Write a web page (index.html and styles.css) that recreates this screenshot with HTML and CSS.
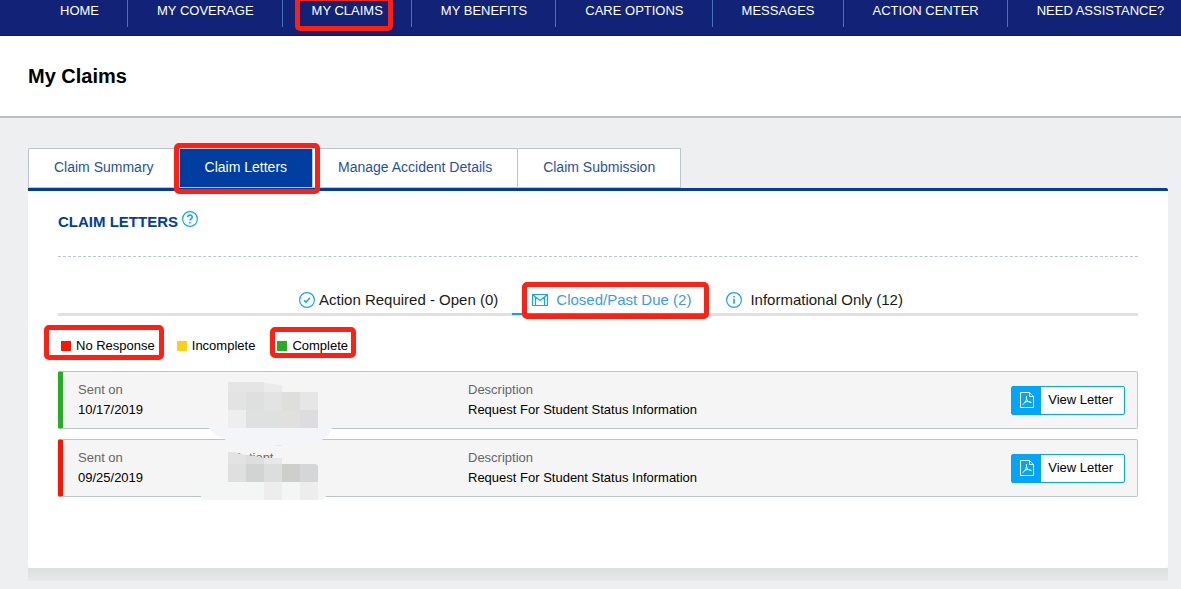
FILE: index.html
```html
<!DOCTYPE html>
<html lang="en">
<head>
<meta charset="utf-8">
<title>My Claims</title>
<link rel="stylesheet" href="styles.css">
</head>
<body>
<nav class="nav" aria-label="Main">
  <a class="nav-item" href="#">HOME</a>
  <a class="nav-item" href="#">MY COVERAGE</a>
  <a class="nav-item marked mark-nav" href="#">MY CLAIMS</a>
  <a class="nav-item" href="#">MY BENEFITS</a>
  <a class="nav-item" href="#">CARE OPTIONS</a>
  <a class="nav-item" href="#">MESSAGES</a>
  <a class="nav-item" href="#">ACTION CENTER</a>
  <a class="nav-item" href="#">NEED ASSISTANCE?</a>
</nav>
<header class="page-head"><h1 class="page-title">My Claims</h1></header>
<main class="content">
  <div class="tabs">
    <button class="tab" type="button">Claim Summary</button>
    <button class="tab active marked mark-tab" type="button">Claim Letters</button>
    <button class="tab" type="button">Manage Accident Details</button>
    <button class="tab" type="button">Claim Submission</button>
  </div>
  <section class="panel">
    <div class="section-head">
      <h2 class="section-title">CLAIM LETTERS</h2>
      <button class="help" type="button" aria-label="Help">
        <svg class="icon" viewBox="0 0 16 16"><circle cx="8" cy="8" r="7.4"/><path class="thick" d="M5.7 6.3c0-3 4.6-3 4.6-.2 0 1.7-2.3 1.6-2.3 3.5M8 11.1v1.5"/></svg>
      </button>
    </div>
    <div class="filters">
      <button class="filter" type="button">
        <svg class="icon" viewBox="0 0 16 16"><circle cx="8" cy="8" r="7.4"/><path class="thick" d="M5 8.4l2 1.8 4-4.4"/></svg>Action Required - Open (0)</button>
      <button class="filter current marked mark-filter" type="button">
        <svg class="icon" viewBox="0 0 16 16"><path d="M.6 2.500h14.800v11H.6zM3.500 13.500V5l4.500 3.500L12.500 5v8.500M.6 2.500L3.500 5M15.400 2.500L12.500 5"/></svg>Closed/Past Due (2)</button>
      <button class="filter info" type="button">
        <svg class="icon" viewBox="0 0 16 16"><circle cx="8" cy="8" r="7.4"/><path class="thick" d="M8 6.8v5M8 4v1.4"/></svg>Informational Only (12)</button>
    </div>
    <ul class="legend">
      <li class="key red marked mark-no">No Response</li>
      <li class="key yellow">Incomplete</li>
      <li class="key green marked mark-yes">Complete</li>
    </ul>
    <div class="letters">
      <article class="letter complete">
        <div class="field sent"><span class="label">Sent on</span><span>10/17/2019</span></div>
        <div class="field patient"></div>
        <div class="field desc"><span class="label">Description</span><span>Request For Student Status Information</span></div>
        <button class="view" type="button"><span class="pdf"><svg class="pdf-icon" viewBox="0 0 14 16"><path d="M.5.5h9l4 4v11H.5zM9.500.5v4h4"/><path d="M6.500 4v3c-.5 2-2 4.500-4 5.800M6.500 7c.8 2 2.500 3.300 5 3.500M4.500 10.300c2-1 4-1 6.500 0"/></svg></span><span class="view-text">View Letter</span></button>
      </article>
      <article class="letter missing">
        <div class="field sent"><span class="label">Sent on</span><span>09/25/2019</span></div>
        <div class="field patient"><span class="label">Patient</span></div>
        <div class="field desc"><span class="label">Description</span><span>Request For Student Status Information</span></div>
        <button class="view" type="button"><span class="pdf"><svg class="pdf-icon" viewBox="0 0 14 16"><path d="M.5.5h9l4 4v11H.5zM9.500.5v4h4"/><path d="M6.500 4v3c-.5 2-2 4.500-4 5.800M6.500 7c.8 2 2.500 3.300 5 3.500M4.500 10.300c2-1 4-1 6.500 0"/></svg></span><span class="view-text">View Letter</span></button>
      </article>
      <svg class="redaction" viewBox="198 380 136 122" aria-hidden="true">
        <path fill="#f4f5f8" d="M209 428h123q-3 8-9 11l-5 5q-40 5-84 0l-10-5q-11-4-15-11z"/>
        <path fill="#e5e5e5" d="M228 382h36v10h-36z"/><path fill="#ebebeb" d="M264 383l18 2v7h-18z"/>
        <path fill="#e3e3e3" d="M228 392h18v18h-18zM264 392h18v18h-18z"/><path fill="#dedfdf" d="M246 392h18v18h-18z"/>
        <path fill="#dededd" d="M282 392h18v18h-18z"/><path fill="#e6e6e6" d="M300 392h18v18h-18z"/>
        <path fill="#eeeeee" d="M228 410h18v18h-18z"/><path fill="#dfe1e0" d="M246 410h36v18h-36z"/>
        <path fill="#e2e0de" d="M282 410h18v18h-18z"/><path fill="#dddde0" d="M300 410h18v18h-18z"/>
        <path fill="#e7e7e7" d="M275 446q4-2 8 0z"/>
        <path fill="#f4f5f5" d="M198 484q16-1 30-2h90l10 3-2 11-4 4H202z"/>
        <path fill="#e3e3e3" d="M228 452h7l5 2 6 1v9h-18z"/><path fill="#dedede" d="M246 455l9 1 9 2v6h-18z"/><path fill="#e8e8e8" d="M264 458h18v6h-18z"/>
        <path fill="#dfdfdf" d="M228 464h18v18h-18z"/><path fill="#d2d4d3" d="M246 464h18v18h-18z"/><path fill="#dcdddd" d="M264 464h18v18h-18z"/>
        <path fill="#cececd" d="M282 464h18v18h-18z"/><path fill="#d5d6d7" d="M300 464h16l2 2v16h-18z"/>
        <path fill="#ededed" d="M264 482h18v18h-18zM300 482h18v18h-18z"/>
      </svg>
    </div>
  </section>
</main>
</body>
</html>
```
FILE: styles.css
```css
* { box-sizing: border-box; }
body { margin: 0; background: #eeeff1; color: #000; font-family: "Liberation Sans", Arial, sans-serif; }
button { border: 0; background: none; padding: 0; margin: 0; color: inherit; font: inherit; cursor: pointer; }
.nav { display: flex; height: 36px; padding-left: 31px; background: #122277; border-bottom: 1px solid #0b1a60; }
.nav-item { height: 27px; padding: 0 28px 0 29px; border-right: 1px solid #4474bd; color: #fff; font-size: 13px; line-height: 22px; text-decoration: none; white-space: nowrap; }
.nav-item:last-child { border-right: 0; padding-right: 0; }
.page-head { display: flex; align-items: center; height: 82px; padding: 0 28px; background: #fff; border-bottom: 2px solid #bbc0c4; }
.page-title { margin: 0; font-size: 20px; line-height: 24px; }
.content { padding: 30px 13px 21px 28px; }

/* Annotation frames */
.marked { position: relative; }
.marked::after { content: ""; position: absolute; z-index: 2; border: 5px solid #ff2013; border-radius: 5px; pointer-events: none; }
.mark-nav::after { inset: -4px 18px -4px 12px; }
.mark-tab::after { inset: -6px -8px -7px -6px; }
.mark-filter::after { inset: -3px -1px -4px 10px; }
.mark-no::after { inset: -11px -9px -4px -17px; }
.mark-yes::after { inset: -9px -8px -2px -7px; }

.tabs { display: flex; }
.tab { height: 40px; padding: 0 25px 3px; background: #fff; border: 1px solid #b8c7cb; border-right-width: 0; color: #1f51a8; font-size: 14px; white-space: nowrap; }
.tab:first-child { border-top-left-radius: 2px; }
.tab:last-child { border-right-width: 1px; }
.tab.active { background: #003da1; color: #fff; }
.panel { min-height: 380px; padding: 20px 30px 71px; background: #fff; border-top: 3px solid #003da1; border-radius: 0 2px 2px 2px; position: relative; }
.panel::after { content: ""; position: absolute; left: 0; right: 0; top: 100%; height: 13px; background: linear-gradient(#dddedf, #e8eaea); }
.section-head { display: flex; gap: 4px; height: 46px; border-bottom: 1px dashed #b8c7cb; }
.section-title { margin: 0; color: #003da1; font-size: 15px; line-height: 21px; }
.help { width: 16px; height: 16px; display: flex; }
.icon { width: 16px; height: 16px; flex: none; fill: none; stroke: #14a5f0; stroke-width: 1.2; }
.thick { stroke-width: 1.6; }
.filters { display: flex; justify-content: center; margin-top: 28px; border-bottom: 3px solid #e0e0e0; font-size: 15px; line-height: 30px; color: #1a1a1a; }
.filter { display: flex; align-items: center; gap: 4px; height: 30px; margin-bottom: -2px; padding: 0 14px; white-space: nowrap; }
.filter.current { gap: 8px; padding: 0 17px 0 20px; color: #3a9cf0; box-shadow: inset 0 -2px #03a5f8; }
.filter.info { gap: 8px; padding: 0 8px 0 18px; }
.legend { display: flex; gap: 22px; margin: 20px 0 15px; padding: 0 0 0 3px; list-style: none; font-size: 13px; line-height: 20px; }
.key { display: flex; align-items: center; gap: 5px; }
.key::before { content: ""; width: 10px; height: 10px; background: currentColor; }
.red::before { background: #ff1200; }
.yellow::before { background: #ffcf12; }
.green::before { background: #23af20; }
.letters { position: relative; display: grid; gap: 10px; }
.letter { display: grid; grid-template-columns: 155px 235px 1fr auto; align-items: center; height: 58px; padding: 0 12px 0 15px; background: #f5f5f5; border: 1px solid #b8c7cb; border-left: 5px solid #23af20; border-radius: 2px; }
.letter.missing { border-left-color: #ff1200; }
.field { display: flex; flex-direction: column; height: 41px; font-size: 13px; line-height: 20px; }
.label { color: #666; }
.view { display: flex; height: 29px; border: 1px solid #03a5f8; border-radius: 2px; background: #fff; font-size: 13px; }
.pdf { display: flex; align-items: center; justify-content: center; width: 29px; height: 27px; background: #03a5f8; }
.pdf-icon { width: 14px; height: 16px; fill: none; stroke: #fff; }
.view-text { padding: 0 11px 0 7px; line-height: 26px; }
.redaction { position: absolute; left: 140px; top: 9px; width: 136px; height: 122px; }
```
